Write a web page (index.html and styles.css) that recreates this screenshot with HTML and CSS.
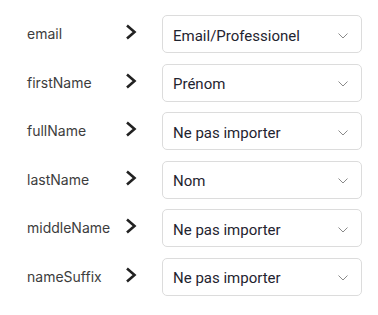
FILE: index.html
```html
<!DOCTYPE html>
<html lang="fr">
<head>
    <meta charset="UTF-8">
    <meta name="viewport" content="width=device-width, initial-scale=1.0">
    <title>Correspondance des champs</title>
    <link rel="stylesheet" href="styles.css">
</head>
<body>
    <div class="mapping">
        <div class="row">
            <span class="field">email</span>
            <svg class="arrow" viewBox="0 0 12 16"><polyline points="2,1.5 9.5,8 2,14.5"/></svg>
            <div class="select"><span>Email/Professionel</span><svg class="caret" viewBox="0 0 10 6"><polyline points="0.5,0.5 5,5 9.5,0.5"/></svg></div>
        </div>
        <div class="row">
            <span class="field">firstName</span>
            <svg class="arrow" viewBox="0 0 12 16"><polyline points="2,1.5 9.5,8 2,14.5"/></svg>
            <div class="select"><span>Prénom</span><svg class="caret" viewBox="0 0 10 6"><polyline points="0.5,0.5 5,5 9.5,0.5"/></svg></div>
        </div>
        <div class="row">
            <span class="field">fullName</span>
            <svg class="arrow" viewBox="0 0 12 16"><polyline points="2,1.5 9.5,8 2,14.5"/></svg>
            <div class="select"><span>Ne pas importer</span><svg class="caret" viewBox="0 0 10 6"><polyline points="0.5,0.5 5,5 9.5,0.5"/></svg></div>
        </div>
        <div class="row">
            <span class="field">lastName</span>
            <svg class="arrow" viewBox="0 0 12 16"><polyline points="2,1.5 9.5,8 2,14.5"/></svg>
            <div class="select"><span>Nom</span><svg class="caret" viewBox="0 0 10 6"><polyline points="0.5,0.5 5,5 9.5,0.5"/></svg></div>
        </div>
        <div class="row">
            <span class="field">middleName</span>
            <svg class="arrow" viewBox="0 0 12 16"><polyline points="2,1.5 9.5,8 2,14.5"/></svg>
            <div class="select"><span>Ne pas importer</span><svg class="caret" viewBox="0 0 10 6"><polyline points="0.5,0.5 5,5 9.5,0.5"/></svg></div>
        </div>
        <div class="row">
            <span class="field">nameSuffix</span>
            <svg class="arrow" viewBox="0 0 12 16"><polyline points="2,1.5 9.5,8 2,14.5"/></svg>
            <div class="select"><span>Ne pas importer</span><svg class="caret" viewBox="0 0 10 6"><polyline points="0.5,0.5 5,5 9.5,0.5"/></svg></div>
        </div>
    </div>
</body>
</html>
```

FILE: styles.css
```css
body {
    margin: 0;
    background-color: #ffffff;
    font-family: "Inter", "Noto Sans", sans-serif;
}

.mapping {
    padding: 15px 0 0 27px;
    display: flex;
    flex-direction: column;
    gap: 10.5px;
}

.row {
    display: flex;
    align-items: center;
    height: 38px;
}

.field {
    width: 98px;
    font-size: 14px;
    color: #3d3d3d;
    margin-top: -1px;
}

.arrow {
    width: 12px;
    height: 16px;
    margin-top: -4px;
    fill: none;
    stroke: #222222;
    stroke-width: 2.6;
}

.select {
    margin-left: 25px;
    width: 200px;
    height: 38px;
    box-sizing: border-box;
    border: 1px solid #dcdcdc;
    border-radius: 5px;
    display: flex;
    align-items: center;
    justify-content: space-between;
    padding: 3px 13px 0 10px;
    font-family: "Roboto", "Noto Sans", sans-serif;
    font-size: 15px;
    color: #1f2430;
}

.caret {
    width: 10px;
    height: 6px;
    fill: none;
    stroke: #8a8a8a;
    stroke-width: 1;
}
```
